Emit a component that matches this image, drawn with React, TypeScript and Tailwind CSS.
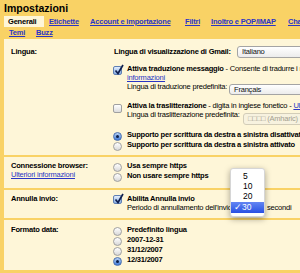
import React from "react";

function Checkbox({ checked }: { checked?: boolean }) {
  if (checked) {
    return (
      <span className="relative block h-[9px] w-[9px] rounded-[2px] border border-[#5f7fb3] bg-linear-to-b from-[#e3eefc] to-[#86ace4]">
        <svg className="absolute left-[0px] top-[-3px]" width="10" height="11" viewBox="0 0 10 11">
          <path d="M1.5 6.5 L4 9.5 L9 1" fill="none" stroke="#10204f" strokeWidth="1.7" />
        </svg>
      </span>
    );
  }
  return <span className="block h-[9px] w-[9px] rounded-[2px] border border-[#a0a0a0] bg-linear-to-b from-white to-[#dcdcdc]" />;
}

function Radio({ checked }: { checked?: boolean }) {
  if (checked) {
    return (
      <span className="flex h-[9px] w-[9px] items-center justify-center rounded-full border border-[#4a6fae] bg-linear-to-b from-[#b8d2f5] to-[#3f7ad8]">
        <span className="block h-[3px] w-[3px] rounded-full bg-[#0d1f47]" />
      </span>
    );
  }
  return <span className="block h-[9px] w-[9px] rounded-full border border-[#a0a0a0] bg-linear-to-b from-white to-[#d8d8d8]" />;
}

function Select({ children, className }: { children: React.ReactNode; className: string }) {
  return (
    <div
      className={
        "shrink-0 rounded-[3px] border border-[#a4a4a4] bg-linear-to-b from-white to-[#ececec] pl-[4px] text-[7.5px] text-[#111] " +
        className
      }
    >
      {children}
    </div>
  );
}

const link = "text-[#2a35c5] underline";

export default function App() {
  return (
    <div className="relative h-[273px] w-[300px] overflow-hidden whitespace-nowrap bg-[#f9d265] font-['Liberation_Sans',Arial,sans-serif] text-[7.5px] tracking-[-0.2px] text-black">
      <div className="h-[16px] pl-[4px] text-[10.5px] leading-[16px] font-bold tracking-normal">Impostazioni</div>
      <div className="flex h-[11px] pl-[4px] font-bold leading-[11px]">
        <span className="w-[40px] shrink-0 bg-[#fef6d8] pl-[4px]">Generali</span>
        <span className="w-[41px] shrink-0 pl-[5px]">
          <span className={link}>Etichette</span>
        </span>
        <span className="w-[95px] shrink-0 pl-[5px]">
          <span className={link}>Account e importazione</span>
        </span>
        <span className="w-[26px] shrink-0 pl-[5px]">
          <span className={link}>Filtri</span>
        </span>
        <span className="w-[77px] shrink-0 pl-[5px]">
          <span className={link}>Inoltro e POP/IMAP</span>
        </span>
        <span className="shrink-0 pl-[5px]">
          <span className={link}>Chat</span>
        </span>
      </div>
      <div className="flex h-[12px] pl-[4px] font-bold leading-[12px]">
        <span className="w-[27px] shrink-0 pl-[5px]">
          <span className={link}>Temi</span>
        </span>
        <span className="shrink-0 pl-[5px]">
          <span className={link}>Buzz</span>
        </span>
      </div>

      <div className="ml-[4px] w-[600px] bg-[#fef6d8]">
        {/* Lingua */}
        <div className="flex pt-[7px] pb-[5px]">
          <div className="h-[12px] w-[109px] shrink-0 pl-[7px] leading-[12px] font-bold">Lingua:</div>
          <div>
            <div className="flex h-[12px] items-center">
              <span className="w-[124px] shrink-0 pl-[1px] leading-[12px] font-bold">Lingua di visualizzazione di Gmail:</span>
              <Select className="h-[12px] w-[110px] leading-[10px]">Italiano</Select>
            </div>
            <div className="mt-[6px] flex">
              <div className="w-[14px] shrink-0 pt-[2px]">
                <Checkbox checked />
              </div>
              <div>
                <div className="h-[9px] leading-[9px]">
                  <b>Attiva traduzione messaggio</b> - Consente di tradurre i messaggi ricevuti in altre lingue. Ulteriori
                </div>
                <div className="h-[9px] leading-[9px]">
                  <span className={link}>informazioni</span>
                </div>
                <div className="flex items-start">
                  <span className="h-[9px] w-[102px] shrink-0 leading-[9px]">Lingua di traduzione predefinita:</span>
                  <Select className="mt-[2px] h-[11px] w-[110px] leading-[9px]">Français</Select>
                </div>
              </div>
            </div>
            <div className="mt-[6px] flex">
              <div className="w-[14px] shrink-0 pt-[3px]">
                <Checkbox />
              </div>
              <div>
                <div className="h-[9px] leading-[9px]">
                  <b>Attiva la traslitterazione</b> - digita in inglese fonetico - <span className={link}>Ulteriori informazioni</span>
                </div>
                <div className="flex items-start">
                  <span className="h-[9px] w-[116px] shrink-0 leading-[9px]">Lingua di traslitterazione predefinita:</span>
                  <div className="mt-[3px] h-[12px] w-[110px] shrink-0 rounded-[3px] border border-[#d3cdb8] bg-[#f7f2df] pl-[4px] leading-[10px] text-[#a39e90]">
                    □□□□ (Amharic)
                  </div>
                </div>
              </div>
            </div>
            <div className="mt-[5px]">
              <div className="flex h-[10px] leading-[10px]">
                <div className="w-[14px] shrink-0 pt-[2px]">
                  <Radio checked />
                </div>
                <b>Supporto per scrittura da destra a sinistra disattivato</b>
              </div>
              <div className="flex h-[10px] leading-[10px]">
                <div className="w-[14px] shrink-0 pt-[2px]">
                  <Radio />
                </div>
                <b>Supporto per scrittura da destra a sinistra attivato</b>
              </div>
            </div>
          </div>
        </div>
        <div className="h-[2px] bg-[#f9d265]" />

        {/* Connessione browser */}
        <div className="flex pt-[4px] pb-[7px]">
          <div className="w-[109px] shrink-0 pl-[7px]">
            <div className="h-[10px] leading-[10px] font-bold">Connessione browser:</div>
            <div className="h-[8px] leading-[8px]">
              <span className={link}>Ulteriori informazioni</span>
            </div>
          </div>
          <div>
            <div className="flex h-[10px] leading-[10px]">
              <div className="w-[14px] shrink-0 pt-[2px]">
                <Radio />
              </div>
              <b>Usa sempre https</b>
            </div>
            <div className="flex h-[10px] leading-[10px]">
              <div className="w-[14px] shrink-0 pt-[2px]">
                <Radio />
              </div>
              <b>Non usare sempre https</b>
            </div>
          </div>
        </div>
        <div className="h-[2px] bg-[#f9d265]" />

        {/* Annulla invio */}
        <div className="flex pt-[4px] pb-[6px]">
          <div className="h-[9px] w-[109px] shrink-0 pl-[7px] leading-[9px] font-bold">Annulla invio:</div>
          <div className="flex">
            <div className="w-[14px] shrink-0 pt-[1px]">
              <Checkbox checked />
            </div>
            <div>
              <div className="h-[9px] leading-[9px] font-bold">Abilita Annulla invio</div>
              <div className="flex h-[9px] items-center leading-[9px]">
                <span className="w-[106px] shrink-0">Periodo di annullamento dell'invio:</span>
                <div className="h-[10px] w-[31px] shrink-0 rounded-[3px] border border-[#a4a4a4] bg-white" />
                <span className="ml-[3px]">secondi</span>
              </div>
            </div>
          </div>
        </div>
        <div className="h-[2px] bg-[#f9d265]" />

        {/* Formato data */}
        <div className="flex pt-[5px] pb-[5px]">
          <div className="h-[10px] w-[109px] shrink-0 pl-[7px] leading-[10px] font-bold">Formato data:</div>
          <div>
            {[
              ["Predefinito lingua", false],
              ["2007-12-31", false],
              ["31/12/2007", false],
              ["12/31/2007", true],
            ].map(([label, on]) => (
              <div key={label as string} className="flex h-[10px] leading-[10px]">
                <div className="w-[14px] shrink-0 pt-[2px]">
                  <Radio checked={on as boolean} />
                </div>
                <b>{label as string}</b>
              </div>
            ))}
          </div>
        </div>
        <div className="h-[2px] bg-[#f9d265]" />
      </div>

      {/* Dropdown popup */}
      <div className="absolute top-[168px] left-[230px] w-[35px] rounded-[3px] border border-[#d6d6d6] bg-white pt-[2px] pb-[3px] text-[8.5px] tracking-normal shadow-[0_2px_6px_rgba(0,0,0,0.35)]">
        <div className="h-[10px] pl-[12px] leading-[10px]">5</div>
        <div className="h-[10px] pl-[12px] leading-[10px]">10</div>
        <div className="h-[11px] pl-[12px] leading-[11px]">20</div>
        <div className="relative h-[11px] bg-linear-to-b from-[#6385f3] to-[#2a4fe3] pl-[11px] leading-[11px] text-white">
          <span className="absolute left-[3px] top-[0px]">✓</span>
          30
        </div>
      </div>
    </div>
  );
}
